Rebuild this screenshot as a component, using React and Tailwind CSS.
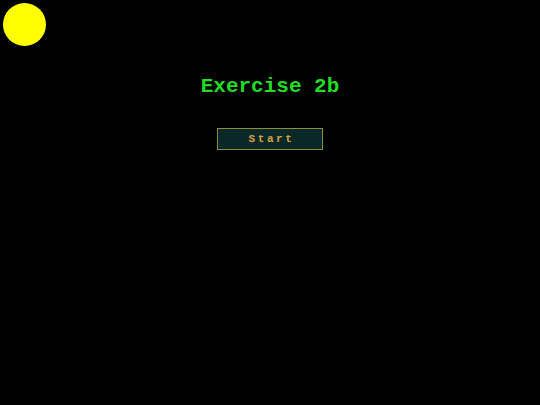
export default function App() {
  return (
    <div className="relative w-[540px] h-[405px] bg-black overflow-hidden font-['Courier_New','Liberation_Mono',monospace]">
      {/* sun */}
      <div className="absolute left-[3px] top-[3px] w-[43px] h-[43px] rounded-full bg-[#ffff00]" />

      <div className="flex flex-col items-center pt-[74px]">
        <h1 className="text-[21px] leading-[26px] font-bold text-[#22dd22]">Exercise 2b</h1>
        <button className="mt-[28px] w-[106px] h-[22px] border border-[#8c8c3c] bg-[#0b2828] text-[11px] font-bold tracking-[2.6px] text-[#d4a443] flex items-center justify-center pl-[3px]">
          Start
        </button>
      </div>
    </div>
  );
}
